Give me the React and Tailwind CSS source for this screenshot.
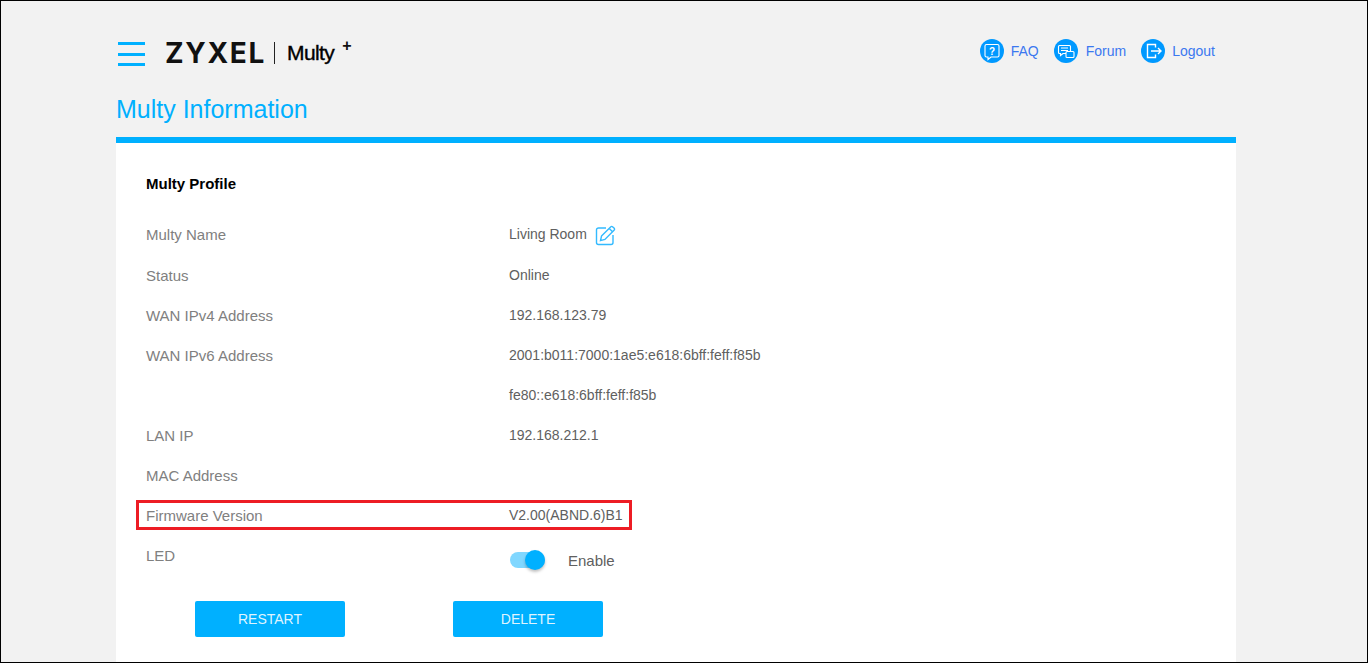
import React from "react";

const font = { fontFamily: '"Liberation Sans", Arial, sans-serif' };

const rows = [
  ["Multy Name", "Living Room", true],
  ["Status", "Online"],
  ["WAN IPv4 Address", "192.168.123.79"],
  ["WAN IPv6 Address", "2001:b011:7000:1ae5:e618:6bff:feff:f85b"],
  ["", "fe80::e618:6bff:feff:f85b"],
  ["LAN IP", "192.168.212.1"],
  ["MAC Address", ""],
];

function Row({ label, value, edit }) {
  return (
    <div className="flex h-10 items-center">
      <div className={edit ? "w-[363px] text-[15px] text-[#808080]" : "w-[363px] pt-[2px] text-[15px] text-[#808080]"}>{label}</div>
      <div className="flex items-center text-[14px] text-[#606060]">
        <span className={edit ? "pb-[2px]" : ""}>{value}</span>
        {edit && (
          <svg className="ml-[8px]" width="21" height="21" viewBox="0 0 21 21" fill="none" stroke="#33baff" strokeWidth="1.4">
            <path d="M11 3H3.500A2 2 0 0 0 1.500 5v12.500a2 2 0 0 0 2 2H16a2 2 0 0 0 2-2V10" />
            <path d="M6.500 11 15.600 1.900a1.600 1.600 0 0 1 2.200 0l1.200 1.200a1.600 1.600 0 0 1 0 2.200L9.900 14.400 5.500 15.600Z" />
            <path d="M14.200 3.400 17.600 6.800" />
          </svg>
        )}
      </div>
    </div>
  );
}

function Circle({ children }) {
  return (
    <span className="flex h-6 w-6 items-center justify-center rounded-full bg-[#0099ff]">
      <svg width="24" height="24" viewBox="0 0 24 24" fill="none" stroke="#ffffff" strokeWidth="1.1">
        {children}
      </svg>
    </span>
  );
}

export default function App() {
  return (
    <div style={font} className="h-[663px] overflow-hidden border border-black bg-[#f2f2f2]">
      <div className="ml-[115px] w-[1120px]">
        <header className="flex h-[92px] items-start">
          <div className="ml-[2px] mt-[41px] flex h-[24px] w-[27px] flex-col justify-between">
            <span className="h-[3px] bg-[#00b0ff]" />
            <span className="h-[3px] bg-[#00b0ff]" />
            <span className="h-[3px] bg-[#00b0ff]" />
          </div>
          <div
            style={{ fontFamily: '"Inter", "Liberation Sans", sans-serif' }}
            className="ml-[20px] mt-[35px] text-[28px] font-bold leading-[34px] tracking-[1.7px] text-[#111111]"
          >
            ZYXEL
          </div>
          <span className="ml-[8px] mt-[41px] h-[22px] w-px bg-[#222222]" />
          <span className="ml-[12px] mt-[39px] text-[21px] font-normal leading-[26px] tracking-[-0.6px] text-black [-webkit-text-stroke:0.4px_black]">
            Multy
          </span>
          <span className="ml-[8px] mt-[35px] text-[16px] font-bold leading-[20px] text-[#111111]">+</span>
          <nav className="ml-auto mr-[21px] mt-[38px] flex items-center text-[14px] text-[#3b78f0]">
            <Circle>
              <path d="M6.500 5.500h11a1.500 1.500 0 0 1 1.500 1.500v9.500a1.500 1.500 0 0 1-1.500 1.500H11l-3 2.500V18H6.500A1.500 1.500 0 0 1 5 16.500V7a1.500 1.500 0 0 1 1.500-1.500Z" />
              <text x="12" y="15.800" fontSize="10" fontWeight="700" fill="#fff" stroke="none" textAnchor="middle">?</text>
            </Circle>
            <span className="ml-[7px]">FAQ</span>
            <span className="ml-[15px]" />
            <Circle>
              <path d="M5.500 6.500h10a1 1 0 0 1 1 1v6a1 1 0 0 1-1 1H9l-2.500 2v-2h-1a1 1 0 0 1-1-1v-6a1 1 0 0 1 1-1Z" />
              <path d="M7 9h7M7 11.500h7" />
              <path d="M13 12.500h6a1 1 0 0 1 1 1v4a1 1 0 0 1-1 1h-6a1 1 0 0 1-1-1v-4a1 1 0 0 1 1-1Z" fill="#0099ff" />
            </Circle>
            <span className="ml-[8px]">Forum</span>
            <span className="ml-[15px]" />
            <Circle>
              <path d="M14.500 8.500V5.500H6.500v13h8v-3" strokeWidth="1.4" />
              <path d="M10 12h10M17 9l3 3-3 3" strokeWidth="1.4" />
            </Circle>
            <span className="ml-[7px]">Logout</span>
          </nav>
        </header>
        <h1 className="h-[44px] text-[25px] font-normal leading-[32px] text-[#00b0ff]">Multy Information</h1>
        <main className="h-[526px] border-t-[6px] border-[#00b0ff] bg-white pl-[30px]">
          <h2 className="pt-[33px] text-[15px] font-bold leading-[16px] text-black">Multy Profile</h2>
          <div className="mt-[23px]">
            {rows.map(([label, value, edit], i) => (
              <Row key={i} label={label} value={value} edit={edit} />
            ))}
            <div className="-ml-[10px] my-[5px] flex h-[30px] w-[496px] items-center border-[3px] border-[#ed1c24] pl-[7px]">
              <div className="w-[363px] pt-[2px] text-[15px] text-[#808080]">Firmware Version</div>
              <div className="text-[14px] text-[#606060]">V2.00(ABND.6)B1</div>
            </div>
            <div className="flex h-[45px]">
              <div className="w-[363px] pt-[11px] text-[15px] leading-[20px] text-[#808080]">LED</div>
              <div className="flex items-center pt-[5px] text-[#606060]">
                <span className="relative ml-[1px] block h-[16px] w-[35px] rounded-full bg-[#80d7ff]">
                  <span className="absolute right-0 top-[-2px] h-5 w-5 rounded-full bg-[#00b0ff] shadow-[0_2px_3px_rgba(0,0,0,0.25)]" />
                </span>
                <span className="ml-[23px] pt-[2px] text-[15px]">Enable</span>
              </div>
            </div>
            <div className="ml-[49px] mt-[21px] flex gap-[108px]">
              <button className="h-9 w-[150px] rounded-[2px] bg-[#00b0ff] text-[14px] text-[#dff4ff]">RESTART</button>
              <button className="h-9 w-[150px] rounded-[2px] bg-[#00b0ff] text-[14px] text-[#dff4ff]">DELETE</button>
            </div>
          </div>
        </main>
      </div>
    </div>
  );
}
